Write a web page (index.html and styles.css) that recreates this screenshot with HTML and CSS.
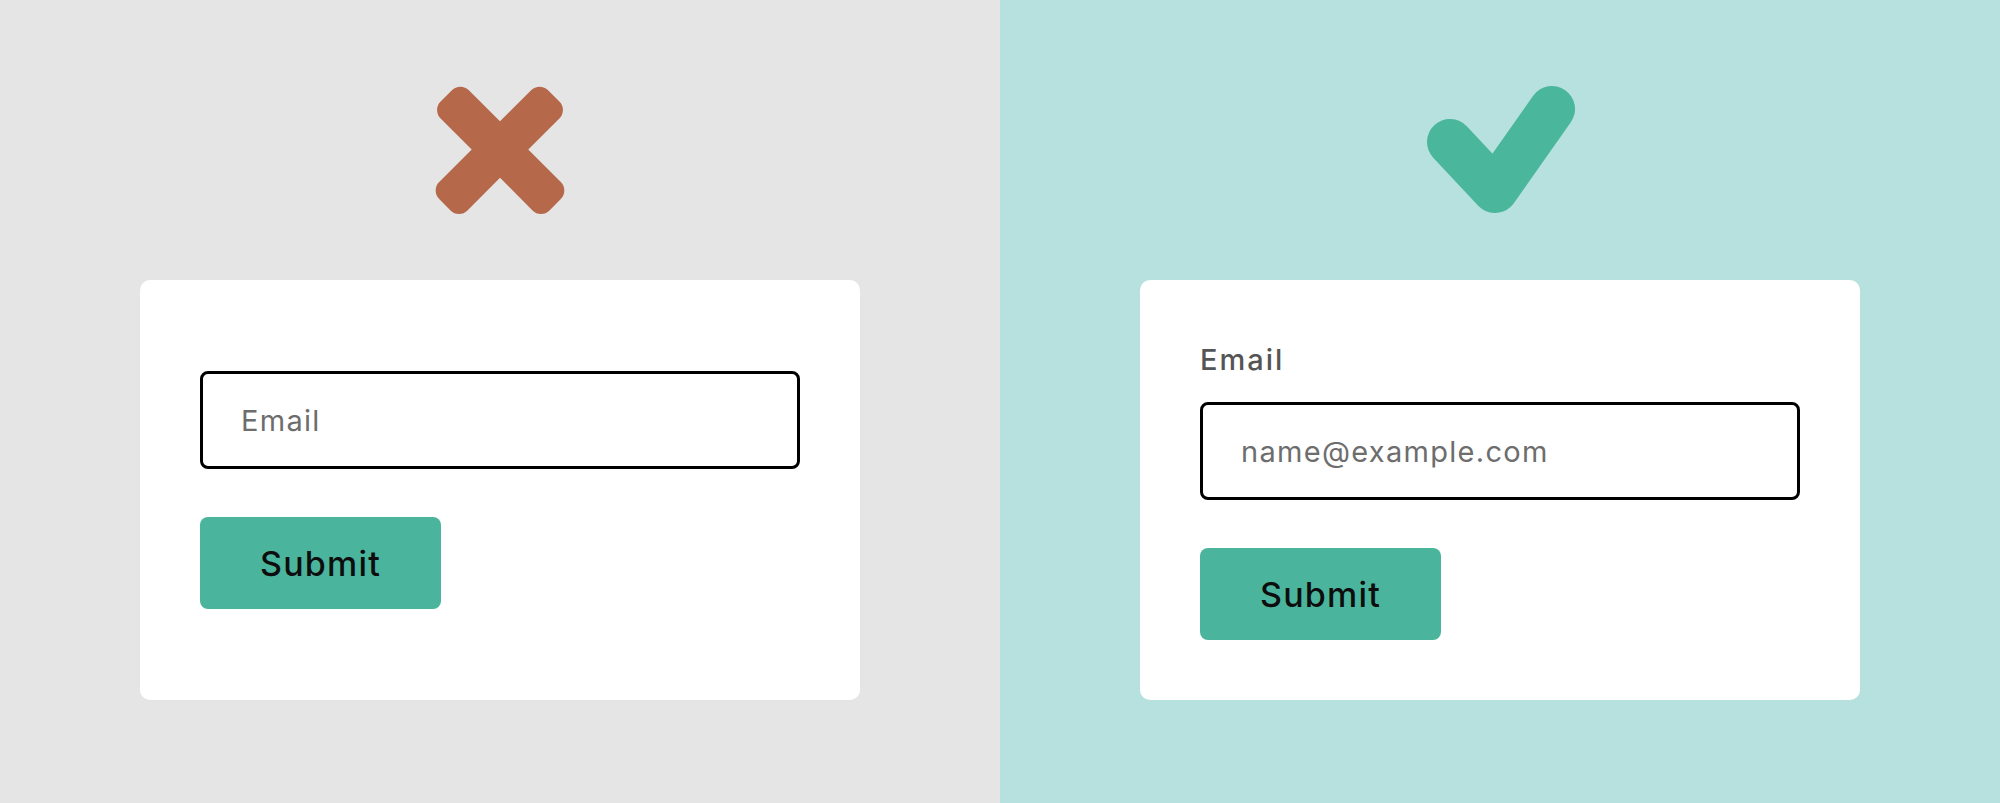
FILE: index.html
```html
<!DOCTYPE html>
<html lang="en">
<head>
    <meta charset="UTF-8">
    <meta name="viewport" content="width=device-width, initial-scale=1.0">
    <title>Form labels: don't vs do</title>
    <link rel="stylesheet" href="styles.css">
</head>
<body>
    <!-- Wrong: placeholder used as label -->
    <section class="panel panel-bad">
        <svg class="mark" width="140" height="140" viewBox="0 0 140 140" aria-hidden="true">
            <rect x="-7" y="50" width="154" height="40" rx="12" fill="#b5694a" transform="rotate(45 70 71)"/>
            <rect x="-7" y="50" width="154" height="40" rx="12" fill="#b5694a" transform="rotate(-45 70 71)"/>
        </svg>
        <form class="card" onsubmit="return false">
            <input class="field" type="email" placeholder="Email">
            <button class="submit" type="submit">Submit</button>
        </form>
    </section>

    <!-- Right: visible label above the field -->
    <section class="panel panel-good">
        <svg class="mark" width="140" height="140" viewBox="0 0 140 140" aria-hidden="true">
            <polyline points="20,62 65,110 122,29" fill="none" stroke="#4ab69c" stroke-width="46" stroke-linecap="round" stroke-linejoin="round"/>
        </svg>
        <form class="card" onsubmit="return false">
            <label class="label" for="email">Email</label>
            <input class="field" id="email" type="email" placeholder="name@example.com">
            <button class="submit" type="submit">Submit</button>
        </form>
    </section>
</body>
</html>
```

FILE: styles.css
```css
body {
    margin: 0;
    display: flex;
    height: 803px;
    overflow: hidden;
    font-family: Inter, 'Liberation Sans', sans-serif;
}

.panel {
    flex: 1;
    display: flex;
    flex-direction: column;
    align-items: center;
    padding-top: 80px;
}

.panel-bad {
    background: #e5e5e5;
}

.panel-good {
    background: #b6e1de;
}

.mark {
    display: block;
    overflow: visible;
    margin-bottom: 60px;
}

.card {
    box-sizing: border-box;
    width: 720px;
    height: 420px;
    padding: 0 60px;
    background: #fff;
    border-radius: 10px;
    display: flex;
    flex-direction: column;
    justify-content: center;
    align-items: flex-start;
}

.label {
    font-size: 29px;
    font-weight: 500;
    line-height: 40px;
    letter-spacing: 2px;
    color: #555;
    margin-bottom: 22px;
}

.field {
    box-sizing: border-box;
    width: 600px;
    height: 98px;
    padding: 0 38px;
    border: 3px solid #000;
    border-radius: 8px;
    font-family: inherit;
    font-size: 29px;
    letter-spacing: 1.3px;
    color: #222;
    outline: none;
}

.field::placeholder {
    color: #6d6d6d;
}

.submit {
    width: 241px;
    height: 92px;
    margin-top: 48px;
    border: none;
    border-radius: 8px;
    background: #4ab59c;
    color: #0d0d0d;
    font-family: inherit;
    font-size: 34px;
    font-weight: 500;
    letter-spacing: 1.2px;
    cursor: pointer;
}
```
